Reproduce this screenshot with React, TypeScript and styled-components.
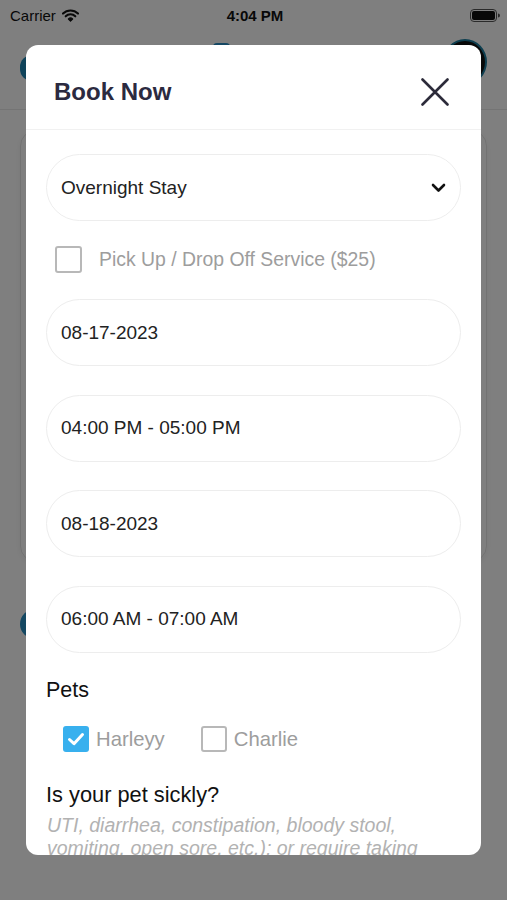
import styled, { createGlobalStyle } from "styled-components";

const GlobalStyle = createGlobalStyle`
  html, body {
    margin: 0;
    padding: 0;
  }
  body {
    font-family: "Liberation Sans", Arial, sans-serif;
    background: #808080;
  }
`;

type BoxProps = {
  $checked?: boolean;
  $size: number;
};

const fields = [
  "08-17-2023",
  "04:00 PM - 05:00 PM",
  "08-18-2023",
  "06:00 AM - 07:00 AM",
];

const pets = [
  { name: "Harleyy", checked: true },
  { name: "Charlie", checked: false },
];

const WifiIcon = () => (
  <svg width="17" height="13" viewBox="0 0 17 13">
    <path d="M1 4.6a10.6 10.6 0 0 1 15 0" fill="none" stroke="#111" strokeWidth="2.1" strokeLinecap="round" />
    <path d="M3.7 7.3a6.8 6.8 0 0 1 9.6 0" fill="none" stroke="#111" strokeWidth="2.1" strokeLinecap="round" />
    <path d="M6.4 10a3 3 0 0 1 4.2 0L8.5 12.2z" fill="#111" stroke="#111" strokeWidth="1.2" strokeLinejoin="round" />
  </svg>
);

const BatteryIcon = () => (
  <svg width="30" height="13" viewBox="0 0 30 13">
    <rect x="0.5" y="0.5" width="26" height="12" rx="3.5" fill="none" stroke="#555" strokeWidth="1" />
    <rect x="2" y="2" width="23" height="9" rx="2" fill="#111" />
    <path d="M28 4.5v4a2 2 0 0 0 0-4z" fill="#555" />
  </svg>
);

const CloseIcon = () => (
  <svg width="28" height="28" viewBox="0 0 28 28">
    <path d="M1.5 1.5l25 25M26.5 1.5l-25 25" stroke="#2c2b3a" strokeWidth="2.6" strokeLinecap="round" />
  </svg>
);

const ChevronIcon = () => (
  <svg width="15" height="10" viewBox="0 0 15 10">
    <path d="M2 2l5.5 5.5L13 2" fill="none" stroke="#111" strokeWidth="2.6" strokeLinecap="round" strokeLinejoin="round" />
  </svg>
);

const CheckIcon = () => (
  <svg width="18" height="14" viewBox="0 0 18 14">
    <path d="M2.5 7.5l4.5 4.2L15.5 2.5" fill="none" stroke="#fff" strokeWidth="3" strokeLinecap="round" strokeLinejoin="round" />
  </svg>
);

export default function App() {
  return (
    <>
      <GlobalStyle />
      <SScreen>
        <SStatusBar>
          <SCarrier>
            Carrier
            <WifiIcon />
          </SCarrier>
          <SClock>4:04 PM</SClock>
          <SBattery>
            <BatteryIcon />
          </SBattery>
        </SStatusBar>

        <SAppHeader>
          <SLogo />
          <SHeaderMark />
          <SAvatar />
        </SAppHeader>

        <SPageCard />
        <SPageDot />

        <SOverlay />

        <SModal>
          <SModalHeader>
            <STitle>Book Now</STitle>
            <SCloseButton>
              <CloseIcon />
            </SCloseButton>
          </SModalHeader>

          <SModalBody>
            <SPillField>
              <span>Overnight Stay</span>
              <ChevronIcon />
            </SPillField>

            <SServiceRow>
              <SBox $size={27} />
              <SGrayLabel>Pick Up / Drop Off Service ($25)</SGrayLabel>
            </SServiceRow>

            {fields.map((value) => (
              <SPillField key={value} $spaced>
                <span>{value}</span>
              </SPillField>
            ))}

            <SSectionLabel>Pets</SSectionLabel>
            <SPetRow>
              {pets.map((pet) => (
                <SPetOption key={pet.name}>
                  <SBox $size={26} $checked={pet.checked}>
                    {pet.checked && <CheckIcon />}
                  </SBox>
                  <SPetName>{pet.name}</SPetName>
                </SPetOption>
              ))}
            </SPetRow>

            <SQuestion>Is your pet sickly?</SQuestion>
            <SHint>
              UTI, diarrhea, constipation, bloody stool, vomiting, open sore, etc.); or require taking
              medication?
            </SHint>
          </SModalBody>
        </SModal>
      </SScreen>
    </>
  );
}

const SScreen = styled.div`
  position: relative;
  width: 507px;
  height: 900px;
  overflow: hidden;
  background: #ffffff;
`;

const SStatusBar = styled.div`
  height: 30px;
  display: grid;
  grid-template-columns: 1fr auto 1fr;
  align-items: center;
  padding: 0 7px 0 10px;
  font-size: 15px;
  color: #111;
`;

const SCarrier = styled.div`
  display: flex;
  align-items: center;
  gap: 6px;
`;

const SClock = styled.div`
  font-weight: bold;
`;

const SBattery = styled.div`
  display: flex;
  justify-content: flex-end;
`;

const SAppHeader = styled.div`
  height: 80px;
  box-sizing: border-box;
  border-bottom: 1px solid #e8e8e8;
  display: flex;
  align-items: flex-start;
  padding: 0 20px;
`;

const SLogo = styled.div`
  width: 24px;
  height: 26px;
  border-radius: 12px;
  background: #1e86b4;
  margin-top: 25px;
`;

const SHeaderMark = styled.div`
  width: 17px;
  height: 24px;
  border-radius: 4px;
  background: #2a8fc6;
  margin: 13px 0 0 169px;
`;

const SAvatar = styled.div`
  width: 40px;
  height: 42px;
  border-radius: 50%;
  background: #111;
  border: 2px solid #1c7d9f;
  margin: 9px 0 0 auto;
`;

const SPageCard = styled.div`
  height: 430px;
  margin: 20px 20px 0;
  border: 1px solid #e4e4e4;
  border-radius: 16px;
  box-shadow: 0 2px 6px rgba(0, 0, 0, 0.06);
`;

const SPageDot = styled.div`
  width: 30px;
  height: 30px;
  border-radius: 50%;
  background: #2a90c4;
  margin: 47px 0 0 20px;
`;

const SOverlay = styled.div`
  position: absolute;
  inset: 0;
  background: rgba(0, 0, 0, 0.5);
`;

const SModal = styled.div`
  position: absolute;
  top: 45px;
  left: 26px;
  width: 455px;
  height: 810px;
  background: #ffffff;
  border-radius: 12px;
  overflow: hidden;
  display: flex;
  flex-direction: column;
`;

const SModalHeader = styled.div`
  height: 85px;
  flex-shrink: 0;
  box-sizing: border-box;
  padding: 10px 31px 0 28px;
  display: flex;
  align-items: center;
  justify-content: space-between;
  border-bottom: 1px solid #f1f1f1;
`;

const STitle = styled.h2`
  margin: 0;
  font-size: 24px;
  font-weight: bold;
  color: #2b2a40;
`;

const SCloseButton = styled.button`
  width: 30px;
  height: 30px;
  padding: 0;
  border: none;
  background: none;
  display: flex;
  align-items: center;
  justify-content: center;
`;

const SModalBody = styled.div`
  padding: 24px 20px 0;
  display: flex;
  flex-direction: column;
`;

const SPillField = styled.div<{ $spaced?: boolean }>`
  height: 67px;
  flex-shrink: 0;
  box-sizing: border-box;
  border: 1px solid #ededed;
  border-radius: 34px;
  padding: 0 14px;
  margin-bottom: ${(props) => (props.$spaced ? "28.5px" : "0")};
  display: flex;
  align-items: center;
  justify-content: space-between;
  font-size: 19px;
  color: #222;
`;

const SServiceRow = styled.div`
  display: flex;
  align-items: center;
  gap: 17px;
  margin: 25px 0 26px 9px;
`;

const SBox = styled.div<BoxProps>`
  width: ${(props) => props.$size}px;
  height: ${(props) => props.$size}px;
  box-sizing: border-box;
  border-radius: 3px;
  border: ${(props) => (props.$checked ? "none" : "2px solid #b8b8b8")};
  background: ${(props) => (props.$checked ? "#38b0ee" : "#fff")};
  display: flex;
  align-items: center;
  justify-content: center;
  flex-shrink: 0;
`;

const SGrayLabel = styled.span`
  font-size: 19.4px;
  color: #9d9d9d;
`;

const SSectionLabel = styled.div`
  margin-top: -3px;
  font-size: 21.5px;
  line-height: 24px;
  color: #111;
`;

const SPetRow = styled.div`
  display: flex;
  align-items: center;
  gap: 36px;
  margin: 24px 0 0 17px;
`;

const SPetOption = styled.label`
  display: flex;
  align-items: center;
  gap: 7px;
`;

const SPetName = styled.span`
  font-size: 20.3px;
  color: #9d9d9d;
`;

const SQuestion = styled.div`
  margin-top: 31px;
  font-size: 21.8px;
  line-height: 24px;
  color: #111;
`;

const SHint = styled.div`
  margin: 7px 0 0 1px;
  font-size: 19.5px;
  line-height: 23px;
  font-style: italic;
  color: #b2b2b2;
`;
